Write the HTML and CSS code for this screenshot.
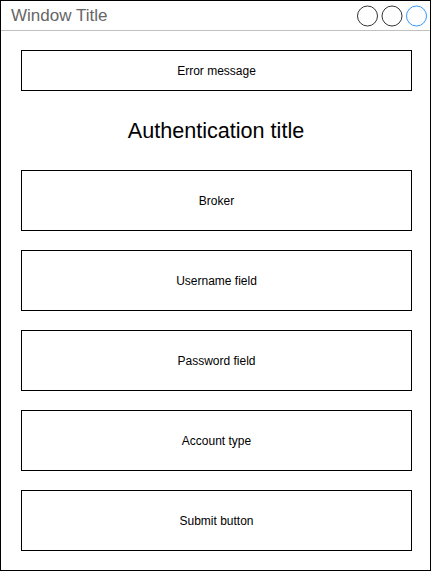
FILE: index.html
```html
<!DOCTYPE html>
<html>
<head>
<meta charset="utf-8">
<link rel="stylesheet" href="styles.css">
</head>
<body>
<div class="window">
  <div class="titlebar">
    <span class="title">Window Title</span>
    <svg class="controls" width="80" height="24" viewBox="0 0 80 24">
      <circle cx="17.5" cy="12" r="10" fill="none" stroke="#333" stroke-width="1"/>
      <circle cx="42" cy="12" r="10" fill="none" stroke="#333" stroke-width="1"/>
      <circle cx="66.5" cy="12" r="10" fill="none" stroke="#3399ff" stroke-width="1"/>
    </svg>
  </div>
  <div class="content">
    <div class="box small">Error message</div>
    <div class="heading">Authentication title</div>
    <div class="stack">
      <div class="box">Broker</div>
      <div class="box">Username field</div>
      <div class="box">Password field</div>
      <div class="box">Account type</div>
      <div class="box">Submit button</div>
    </div>
  </div>
</div>
</body>
</html>
```

FILE: styles.css
```css
html, body {
  margin: 0;
  padding: 0;
  background: #fff;
}
.window {
  box-sizing: border-box;
  width: 431px;
  height: 571px;
  border: 1px solid #000;
  font-family: "Liberation Sans", Arial, sans-serif;
}
.titlebar {
  box-sizing: border-box;
  height: 30px;
  border-bottom: 1px solid #c0c0c0;
  display: flex;
  align-items: center;
  justify-content: space-between;
  padding: 0 0 0 10px;
}
.title {
  font-size: 17px;
  color: #666;
}
.controls {
  display: block;
  margin-top: 1px;
}
.content {
  padding: 19px 19px 0 20px;
}
.box {
  box-sizing: border-box;
  width: 391px;
  height: 61px;
  border: 1px solid #000;
  display: flex;
  align-items: center;
  justify-content: center;
  font-size: 12px;
  color: #000;
}
.box.small {
  height: 41px;
}
.heading {
  height: 79px;
  display: flex;
  align-items: center;
  justify-content: center;
  font-size: 21.6px;
  color: #000;
}
.stack {
  display: flex;
  flex-direction: column;
  gap: 19px;
}
```
